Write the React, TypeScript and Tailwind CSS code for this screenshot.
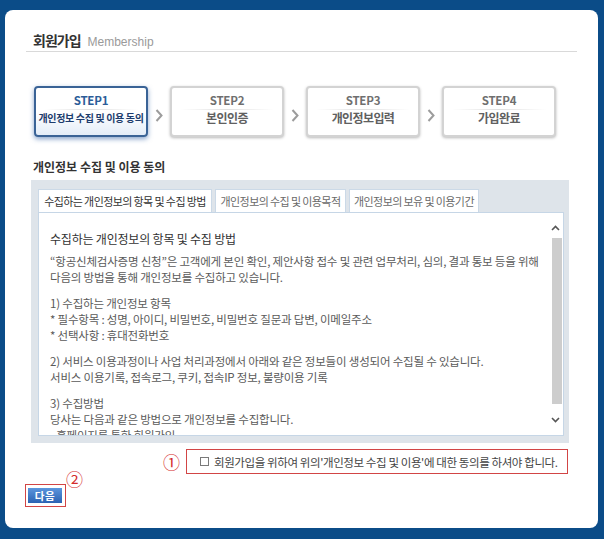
import React from "react";

const steps = [
  { no: "STEP1", name: "개인정보 수집 및 이용 동의", active: true },
  { no: "STEP2", name: "본인인증", active: false },
  { no: "STEP3", name: "개인정보입력", active: false },
  { no: "STEP4", name: "가입완료", active: false },
];

const tabs = [
  { label: "수집하는 개인정보의 항목 및 수집 방법", w: "w-[174px]", on: true },
  { label: "개인정보의 수집 및 이용목적", w: "w-[131px]", on: false },
  { label: "개인정보의 보유 및 이용기간", w: "w-[130px]", on: false },
];

// null = blank line between blocks
const body: (string | null)[] = [
  "\u201C항공신체검사증명 신청\u201D은 고객에게 본인 확인, 제안사항 접수 및 관련 업무처리, 심의, 결과 통보 등을 위해",
  "다음의 방법을 통해 개인정보를 수집하고 있습니다.",
  null,
  "1) 수집하는 개인정보 항목",
  "* 필수항목 : 성명, 아이디, 비밀번호, 비밀번호 질문과 답변, 이메일주소",
  "* 선택사항 : 휴대전화번호",
  null,
  "2) 서비스 이용과정이나 사업 처리과정에서 아래와 같은 정보들이 생성되어 수집될 수 있습니다.",
  "서비스 이용기록, 접속로그, 쿠키, 접속IP 정보, 불량이용 기록",
  null,
  "3) 수집방법",
  "당사는 다음과 같은 방법으로 개인정보를 수집합니다.",
  "- 홈페이지를 통한 회원가입",
];

function StepBox({ no, name, active }: { no: string; name: string; active: boolean }) {
  return (
    <div
      className={
        active
          ? "w-[114px] h-[51px] rounded-[4px] border-2 border-[#3a6396] bg-gradient-to-b from-white via-white to-[#e4edf8] shadow-[0_2px_5px_rgba(40,90,160,0.55)] flex flex-col items-center pt-[5px]"
          : "w-[114px] h-[51px] rounded-[4px] border-2 border-[#d3d3d3] bg-white shadow-[0_1px_3px_rgba(0,0,0,0.28)] flex flex-col items-center pt-[5px]"
      }
    >
      <div
        className={
          active
            ? "text-[11.5px] leading-[14px] font-bold tracking-[-0.2px] text-[#2b5c98]"
            : "text-[11.5px] leading-[14px] font-bold tracking-[-0.2px] text-[#6f6f6f]"
        }
      >
        {no}
      </div>
      <div className="mt-[2px] h-px w-[94px] bg-gradient-to-r from-transparent via-[#e0e0e0] to-transparent" />
      <div
        className={
          active
            ? "text-[10px] leading-[16px] font-bold tracking-[-0.35px] text-[#1d3c6c] whitespace-nowrap"
            : "text-[12px] leading-[16px] font-bold tracking-[-0.6px] text-[#606060] whitespace-nowrap"
        }
      >
        {name}
      </div>
    </div>
  );
}

function Chevron() {
  return (
    <div className="w-[22px] flex justify-center pt-[23px]">
      <svg width="8" height="13" viewBox="0 0 8 13">
        <polyline points="1.5,1 6.5,6.5 1.5,12" fill="none" stroke="#9c9c9c" strokeWidth="2" />
      </svg>
    </div>
  );
}

export default function App() {
  return (
    <div className="min-h-[539px] bg-[#0b4c88] pt-[10px] pl-[5px] font-['Noto_Sans_CJK_KR','Noto_Sans',sans-serif]">
      <div className="w-[593px] h-[518px] rounded-[8px] bg-white px-[21px] pt-[20px]">
        {/* title */}
        <div className="flex items-baseline h-[22px] pb-[2px] border-b border-[#d9d9d9] pl-[7px]">
          <span className="text-[14px] leading-[20px] font-bold tracking-[-1px] text-[#333]">회원가입</span>
          <span className="ml-[7px] text-[12px] leading-[20px] text-[#9a9a9a] font-['Liberation_Sans',sans-serif]">
            Membership
          </span>
        </div>

        {/* steps */}
        <div className="mt-[34px] ml-[8px] flex items-start">
          {steps.map((s, i) => (
            <React.Fragment key={s.no}>
              {i > 0 && <Chevron />}
              <StepBox no={s.no} name={s.name} active={s.active} />
            </React.Fragment>
          ))}
        </div>

        <div className="mt-[22px] ml-[7px] text-[12px] font-bold leading-[16px] tracking-[0px] text-[#333]">
          개인정보 수집 및 이용 동의
        </div>

        {/* terms panel */}
        <div className="mt-[5px] ml-[5px] w-[538px] h-[263px] bg-[#dee4ea] pl-[7px] pr-[5px] pt-[9px]">
          <div className="flex gap-[3px] h-[23px]">
            {tabs.map((t) => (
              <div
                key={t.label}
                className={
                  t.w +
                  (t.on
                    ? " h-[23px] bg-white border border-b-0 border-[#cbd9e7] flex items-center justify-center text-[11px] tracking-[-0.6px] text-[#333] whitespace-nowrap"
                    : " h-[23px] bg-white border border-b-0 border-[#cbd9e7] flex items-center justify-center text-[11px] tracking-[-0.6px] text-[#6a6a6a] whitespace-nowrap")
                }
              >
                {t.label}
              </div>
            ))}
          </div>
          <div className="h-[224px] bg-white border border-[#c6d6e6] flex">
            <div className="flex-1 overflow-hidden pl-[11px] pt-[17px]">
              <div className="text-[12px] leading-[18px] tracking-[-0.2px] text-[#333]">
                수집하는 개인정보의 항목 및 수집 방법
              </div>
              <div className="mt-[5px] text-[11.5px] leading-[16px] tracking-[-0.2px] text-[#5a5a5a] whitespace-nowrap">
                {body.map((line, i) =>
                  line === null ? <div key={i} className="h-[10px]" /> : <div key={i}>{line}</div>
                )}
              </div>
            </div>
            {/* scrollbar */}
            <div className="w-[16px] flex flex-col">
              <div className="h-[25px] pt-[5px] flex items-center justify-center">
                <svg width="9" height="6" viewBox="0 0 9 6">
                  <polyline points="1,5 4.5,1.5 8,5" fill="none" stroke="#555" strokeWidth="1.6" />
                </svg>
              </div>
              <div className="ml-[5px] w-[10px] h-[166px] bg-[#cdcdcd]" />
              <div className="flex-1 flex items-center justify-center">
                <svg width="9" height="6" viewBox="0 0 9 6">
                  <polyline points="1,1 4.5,4.5 8,1" fill="none" stroke="#555" strokeWidth="1.6" />
                </svg>
              </div>
            </div>
          </div>
        </div>

        {/* agree row */}
        <div className="mt-[6px] flex items-center justify-end pr-[9px]">
          <span className="mr-[6px] text-[17px] leading-[20px] text-[#d42b2b]">①</span>
          <div className="h-[25px] w-[382px] border border-[#d24545] flex items-center pl-[13px]">
            <span className="w-[9px] h-[9px] border border-[#7a7a7a]" />
            <span className="ml-[5px] text-[11.5px] leading-[16px] tracking-[-0.4px] text-[#444] whitespace-nowrap">
              회원가입을 위하여 위의'개인정보 수집 및 이용'에 대한 동의를 하셔야 합니다.
            </span>
          </div>
        </div>

        {/* next button */}
        <div className="mt-[10px] -ml-px relative w-[41px] h-[23px] border border-[#d24545] px-[2px] py-[3px]">
          <div className="h-[15px] w-[34px] bg-gradient-to-b from-[#5b95dd] to-[#2b63b3] text-white text-[10.5px] font-bold leading-[15px] text-center tracking-[0.5px]">
            다음
          </div>
          <span className="absolute left-[40px] top-[-16px] text-[17px] leading-[20px] text-[#d42b2b]">②</span>
        </div>
      </div>
    </div>
  );
}
